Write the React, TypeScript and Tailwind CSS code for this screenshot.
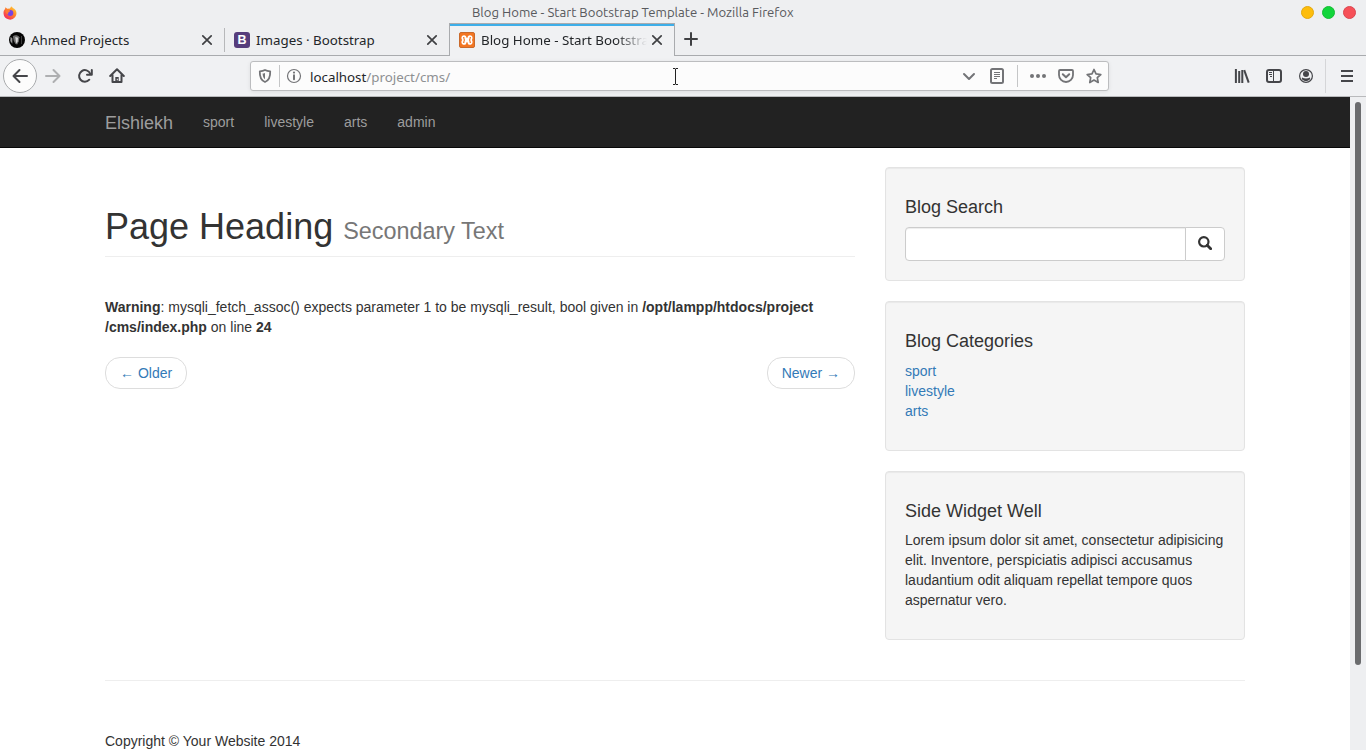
import React from "react";

type IconProps = { children: React.ReactNode; className?: string };

function Icon({ children, className = "text-[#45464a]" }: IconProps) {
  return (
    <svg viewBox="0 0 16 16" width="16" height="16" fill="none" stroke="currentColor" strokeWidth="2" strokeLinecap="round" strokeLinejoin="round" className={className}>
      {children}
    </svg>
  );
}

function Cell({ children, small = false }: { children: React.ReactNode; small?: boolean }) {
  return <div className={`flex h-full shrink-0 items-center justify-center ${small ? "w-7" : "w-8"}`}>{children}</div>;
}

function CloseIcon() {
  return (
    <svg viewBox="0 0 12 12" width="12" height="12" stroke="#3f4043" strokeWidth="1.7" strokeLinecap="round" className="shrink-0">
      <path d="M1.8 1.8l8.4 8.4M10.2 1.8l-8.4 8.4" />
    </svg>
  );
}

function TitleBar() {
  return (
    <div className="grid h-[23px] grid-cols-[469px_1fr_100px] pr-[10px] pl-[3px]">
      <svg viewBox="0 0 14 14" width="14" height="14" className="mt-[6px]">
        <defs>
          <linearGradient id="flame" x1="1" y1="0" x2="0.2" y2="1">
            <stop offset="0" stopColor="#ffe53b" />
            <stop offset="0.45" stopColor="#ff8a2a" />
            <stop offset="1" stopColor="#f5225f" />
          </linearGradient>
        </defs>
        <path d="M7 2.600L8.200.2C9 1.600 10 1.600 11.200 2.800L12 3.400C14 5.600 13.900 9 12 11.300A6.500 6.500 0 0 1 .6 8C.2 5.300 1.200 4 2 3l.5-1.700 1.700 1.500z" fill="url(#flame)" />
        <circle cx="7.300" cy="7" r="3" fill="#7542e5" />
        <path d="M2.500 4.500c2-1.500 3.800-.6 4.800.4L5.800 6.300c-.7.300-1 1-.4 2C3.500 8 2.300 6.500 2.500 4.500z" fill="#ff7a35" />
      </svg>
      <span className="mt-[3px] font-['Ubuntu','Noto_Sans',sans-serif] text-[13.170px] leading-[19px] whitespace-nowrap text-[#58595d]">
        Blog Home - Start Bootstrap Template - Mozilla Firefox
      </span>
      <div className="mt-[6px] flex justify-end gap-2">
        <span className="h-[13px] w-[13px] rounded-full border border-[#e4a90d] bg-[#fdbd0c]" />
        <span className="h-[13px] w-[13px] rounded-full border border-[#15bd35] bg-[#12d53b]" />
        <span className="h-[13px] w-[13px] rounded-full border border-[#da4650] bg-[#f65058]" />
      </div>
    </div>
  );
}

function TabBar() {
  return (
    <div className="flex h-[33px] font-['Noto_Sans',sans-serif] text-[13.330px] text-[#232629]">
      <div className="flex w-[224px] items-center border-b border-[#a9abae] pt-px pr-[11px] pl-[9px]">
        <svg viewBox="0 0 16 16" width="16" height="16" className="mr-[6px]">
          <circle cx="8" cy="8" r="8" fill="#050505" />
          <path d="M3.800 4.300C5.500 2.800 9 3 10.400 5.200L9.800 9.500 8.200 12.500 6.500 12 4.800 9z" fill="#6e6e6e" />
          <path d="M6.300 5l2.700.8-.4 4-1.500 1.800z" fill="#d8d8d8" />
          <path d="M1.600 4.800l1.700 1.700v5.200L1.300 9z" fill="#999" />
          <path d="M12.500 4v8" stroke="#3c3c3c" />
        </svg>
        <span className="flex-1 pt-[2px] whitespace-nowrap">Ahmed Projects</span>
        <CloseIcon />
      </div>
      <div className="flex w-[225px] border-b border-[#a9abae]">
        <span className="mt-[5px] h-6 w-px bg-[#b7b8ba]" />
        <div className="flex flex-1 items-center pt-px pr-[11px] pl-[9px]">
          <span className="mr-[6px] flex h-4 w-4 items-center justify-center rounded-[3px] bg-[#563d7c] pt-px font-['Liberation_Sans',sans-serif] text-[12.500px] leading-none font-bold text-white">B</span>
          <span className="flex-1 pt-[2px] whitespace-nowrap">Images · Bootstrap</span>
          <CloseIcon />
        </div>
      </div>
      <div className="flex w-[226px] items-center border-x border-t border-[#a9abae] bg-[#f0f1f3] shadow-[inset_0_2px_0_#3daee9] pr-[11px] pl-[9px]">
        <svg viewBox="0 0 16 16" width="16" height="16" className="mr-[6px] shrink-0">
          <rect x=".5" y=".5" width="15" height="15" rx="1.500" fill="#f37623" stroke="#c96a2c" />
          <path d="M5 3.200C6.600 3.200 7.400 4.200 7.500 5.800H8.500C8.600 4.200 9.400 3.200 11 3.200 13.600 3.200 14.200 6.200 12.900 8 14.200 9.800 13.600 12.800 11 12.800 9.400 12.800 8.600 11.800 8.500 10.200H7.500C7.400 11.800 6.600 12.800 5 12.800 2.400 12.800 1.800 9.800 3.100 8 1.800 6.200 2.400 3.200 5 3.200z" fill="#fff" />
          <path d="M5.400 5.600H4.700L5.400 8 4.700 10.400H5.400M10.600 5.600H11.300L10.600 8 11.300 10.400H10.600" fill="none" stroke="#f37623" strokeWidth="1.100" />
        </svg>
        <span className="w-[166px] overflow-hidden pt-[2px] whitespace-nowrap [mask-image:linear-gradient(to_right,black_135px,transparent_166px)]">Blog Home - Start Bootstrap Template</span>
        <span className="ml-auto flex"><CloseIcon /></span>
      </div>
      <div className="flex flex-1 items-center border-b border-[#a9abae] pl-[9px]">
        <svg viewBox="0 0 14 14" width="14" height="14" stroke="#3f4043" strokeWidth="2" strokeLinecap="round" className="mb-px">
          <path d="M7 1v12M1 7h12" />
        </svg>
      </div>
    </div>
  );
}

function AddressBar() {
  const gray = "text-[#737477]";
  return (
    <div className="ml-[117px] flex h-[30px] w-[859px] items-center rounded-[3px] border border-[#bcbdbf] bg-[#fcfcfc] shadow-[0_1px_4px_rgba(0,0,0,0.08)]">
      <Cell small>
        <Icon className={gray}>
          <path d="M8 2C10 3 12 3.200 13.200 3.300 13.400 8.600 12 12.500 8 14 4 12.500 2.600 8.600 2.800 3.300 4 3.200 6 3 8 2z" strokeWidth="1.800" />
          <path d="M8 5c-.9.400-1.600.5-2.400.6.100 2.700.8 4.500 2.400 5.700z" fill="currentColor" stroke="none" />
        </Icon>
      </Cell>
      <span className="h-[22px] w-px bg-[#c5c6c7]" />
      <Cell small>
        <Icon className={gray}>
          <circle cx="8" cy="8" r="6.500" strokeWidth="1.200" />
          <path d="M8 7.300v3.900" />
          <circle cx="8" cy="4.600" r="1.100" fill="currentColor" stroke="none" />
        </Icon>
      </Cell>
      <span className="ml-[2px] pt-[3px] font-['Noto_Sans',sans-serif] text-[13.330px] text-[#232629]">
        localhost<span className="text-[#8e9092]">/project/cms/</span>
      </span>
      <div className="ml-auto flex h-full items-center">
        <Cell small>
          <Icon className={gray}><path d="M3 6l5 5 5-5" /></Icon>
        </Cell>
        <Cell small>
          <Icon className={gray}>
            <rect x="2" y="1" width="12" height="14" rx="1.500" />
            <path d="M5 4.500h6M5 6.500h6M5 8.500h6M5 10.500h3" strokeWidth="1" strokeLinecap="butt" />
          </Icon>
        </Cell>
        <span className="mx-[6px] h-[22px] w-px bg-[#c5c6c7]" />
        <Cell small>
          <Icon className={gray}>
            <g fill="currentColor" stroke="none"><circle cx="2" cy="8" r="2" /><circle cx="8" cy="8" r="2" /><circle cx="14" cy="8" r="2" /></g>
          </Icon>
        </Cell>
        <Cell small>
          <Icon className={gray}>
            <path d="M2 2h12q1 0 1 1v4a7 7 0 0 1-14 0V3q0-1 1-1z" strokeWidth="1.800" />
            <path d="M4.800 6.300L8 9.300l3.200-3" />
          </Icon>
        </Cell>
        <Cell small>
          <Icon className={gray}>
            <path d="M8 1.500l2 4.400 4.800.6-3.500 3.200.9 4.800L8 12.100l-4.200 2.400.9-4.800L1.200 6.500 6 5.900z" strokeWidth="1.700" />
          </Icon>
        </Cell>
      </div>
    </div>
  );
}

function Toolbar() {
  return (
    <div className="flex h-[41px] items-center border-b border-[#b9babc] bg-[#f0f1f3] pr-[3px] pl-[3px]">
      <div className="flex h-[34px] w-[34px] items-center justify-center rounded-full border border-[#a9abad] bg-[#fcfcfc]">
        <Icon><path d="M15 8H1.500M7.500 2l-6 6 6 6" /></Icon>
      </div>
      <Cell><Icon className="text-[#aeafb1]"><path d="M1 8h13.500M8.500 2l6 6-6 6" /></Icon></Cell>
      <Cell>
        <Icon>
          <path d="M12.300 11.700A5.800 5.800 0 1 1 13.200 5.600" />
          <path d="M14.800 2v4.800H10" />
        </Icon>
      </Cell>
      <Cell>
        <Icon>
          <path d="M1.200 8L8 1.300 14.800 8M3.500 7v7h9V7" />
          <path d="M8 14V9" strokeWidth="3.400" strokeLinecap="butt" />
          <path d="M8.300 10.800v1.500" stroke="#f0f1f3" strokeWidth="1" strokeLinecap="butt" />
        </Icon>
      </Cell>
      <AddressBar />
      <div className="ml-auto flex h-full items-center">
        <Cell>
          <Icon>
            <path d="M1.900 1v14M5.200 3v12M8.300 2v13" strokeLinecap="butt" />
            <path d="M10.200 2.200l4.500 12.500" strokeLinecap="butt" />
          </Icon>
        </Cell>
        <Cell>
          <Icon>
            <rect x="1" y="2" width="14" height="12" rx="2" />
            <path d="M7.500 2v12M3 4.500h3M3 6.500h3M4 8.500h2" strokeWidth="1" strokeLinecap="butt" />
          </Icon>
        </Cell>
        <Cell>
          <Icon>
            <circle cx="8" cy="8" r="6.400" strokeWidth="1.200" />
            <circle cx="8" cy="6" r="3" fill="currentColor" stroke="none" />
            <path d="M4 9.500c2.300 1.200 5.700 1.200 8 0 .8 1.800-1.500 3.500-4 3.500s-4.800-1.700-4-3.500z" fill="currentColor" stroke="none" />
          </Icon>
        </Cell>
        <span className="mr-[5px] ml-[3px] h-[34px] w-px bg-[#d5d6d8]" />
        <Cell><Icon><path d="M2 3h12M2 8h12M2 13h12" strokeLinecap="butt" /></Icon></Cell>
      </div>
    </div>
  );
}

function Well({ title, children }: { title: string; children: React.ReactNode }) {
  return (
    <section className="mb-5 rounded-[4px] border border-[#e3e3e3] bg-[#f5f5f5] p-[19px] shadow-[inset_0_1px_1px_rgba(0,0,0,0.05)]">
      <h4 className="mt-[11.200px] mb-[8.800px] text-[18px] leading-[19.8px] font-medium">{title}</h4>
      {children}
    </section>
  );
}

function Page() {
  return (
    <div className="h-[653px] w-[1350px] overflow-hidden bg-white font-['Liberation_Sans',Arial,sans-serif] text-[14px] leading-5 text-[#333]">
      <nav className="flex h-[51px] border-b border-[#080808] bg-[#222] pl-[105px] text-[#9d9d9d]">
        <a className="pt-[16px] pr-[15px] text-[18px] leading-5">Elshiekh</a>
        {["sport", "livestyle", "arts", "admin"].map((item) => (
          <a key={item} className="px-[15px] pt-[15px]">{item}</a>
        ))}
      </nav>
      <div className="mx-auto w-[1140px] pt-[19px]">
        <div className="flex gap-[30px]">
          <main className="w-[750px]">
            <h1 className="mt-10 mb-5 border-b border-[#eee] pb-[9px] text-[36px] leading-[39.6px] font-medium">
              Page Heading <small className="text-[23.4px] leading-none font-normal text-[#777]">Secondary Text</small>
            </h1>
            <p className="pt-5">
              <b>Warning</b>: mysqli_fetch_assoc() expects parameter 1 to be mysqli_result, bool given in <b>/opt/lampp/htdocs/project<br />/cms/index.php</b> on line <b>24</b>
            </p>
            <div className="my-5 flex justify-between text-[#337ab7]">
              <a className="rounded-[15px] border border-[#ddd] bg-white px-[14px] py-[5px]">← Older</a>
              <a className="rounded-[15px] border border-[#ddd] bg-white px-[14px] py-[5px]">Newer →</a>
            </div>
          </main>
          <aside className="w-[360px]">
            <Well title="Blog Search">
              <div className="flex h-[34px]">
                <input aria-label="Blog Search" className="h-[34px] w-[281px] rounded-l-[4px] border border-[#ccc] bg-white px-3 shadow-[inset_0_1px_1px_rgba(0,0,0,0.075)]" />
                <button aria-label="Search" className="-ml-px flex w-10 items-center justify-center rounded-r-[4px] border border-[#ccc] bg-white pb-[2px]">
                  <svg viewBox="0 0 14 14" width="14" height="14" fill="none" stroke="#333">
                    <circle cx="5.800" cy="5.800" r="4.700" strokeWidth="2.200" />
                    <path d="M9.200 9.200l3.500 3.500" strokeWidth="2.800" strokeLinecap="round" />
                  </svg>
                </button>
              </div>
            </Well>
            <Well title="Blog Categories">
              <ul className="mb-[10px] text-[#337ab7]">
                <li>sport</li>
                <li>livestyle</li>
                <li>arts</li>
              </ul>
            </Well>
            <Well title="Side Widget Well">
              <p className="mb-[10px]">Lorem ipsum dolor sit amet, consectetur adipisicing elit. Inventore, perspiciatis adipisci accusamus laudantium odit aliquam repellat tempore quos aspernatur vero.</p>
            </Well>
          </aside>
        </div>
        <hr className="mt-5 mb-[50px] border-[#eee]" />
        <footer>Copyright © Your Website 2014</footer>
      </div>
    </div>
  );
}

export default function App() {
  return (
    <div className="relative h-[750px] w-[1366px] overflow-hidden bg-[#eeeff1]">
      <TitleBar />
      <TabBar />
      <Toolbar />
      <div className="flex">
        <Page />
        <div className="flex w-4 pt-[5px] pl-[5px]">
          <span className="h-[563px] w-[6px] rounded-full bg-[#6b6c6e]" />
        </div>
      </div>
      <svg viewBox="0 0 8 18" width="8" height="18" className="absolute top-[68px] left-[672px]" fill="none" stroke="#222" strokeWidth="1">
        <path d="M1 .5h2l.5.5L4 .5h2M3.500 1v15M1 16.500h2l.5-.5.5.5h2" />
      </svg>
    </div>
  );
}
